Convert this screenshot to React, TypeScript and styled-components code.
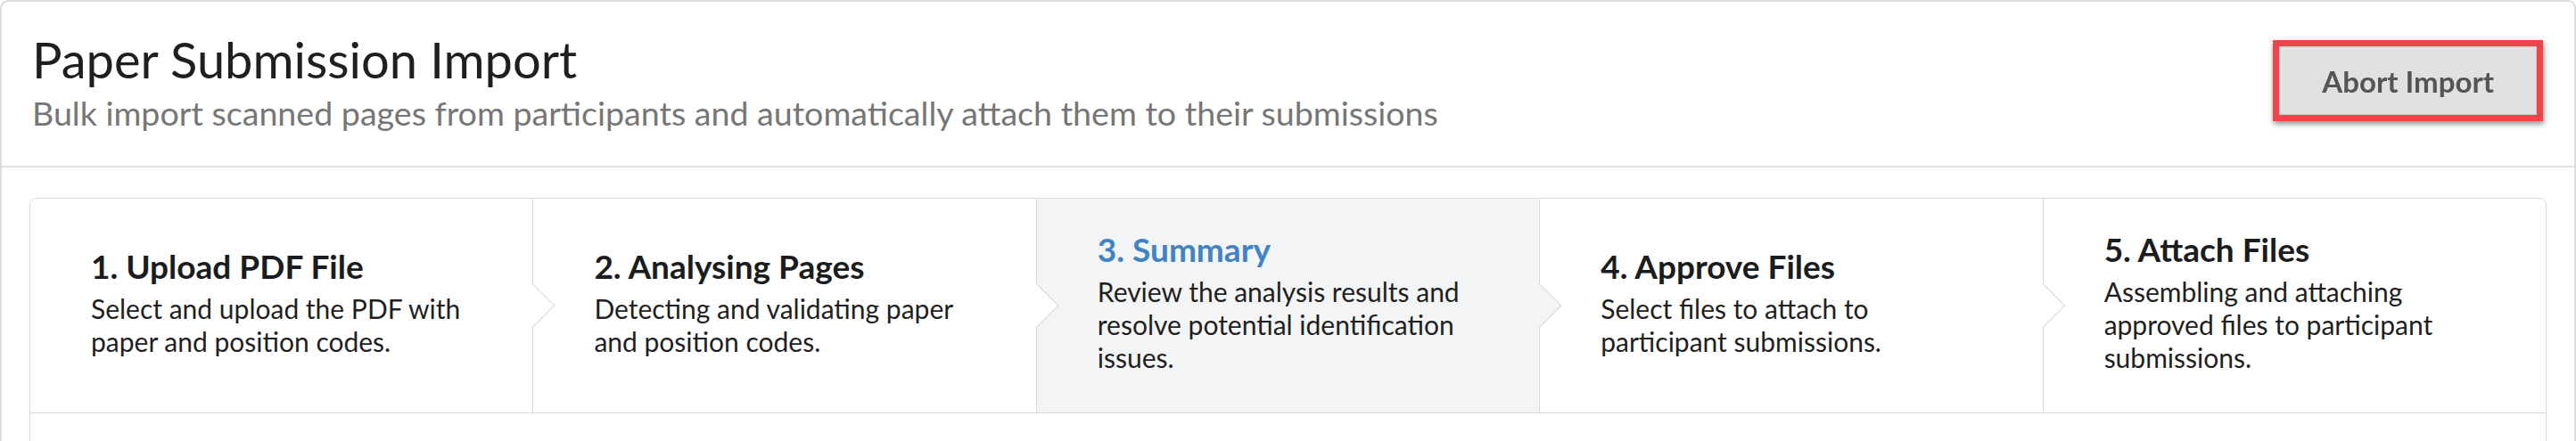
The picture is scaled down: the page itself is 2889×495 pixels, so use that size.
import React from "react";
import styled, { createGlobalStyle } from "styled-components";

const GlobalStyle = createGlobalStyle`
  html, body {
    margin: 0;
    padding: 0;
    background: #ffffff;
    font-family: Lato, "Noto Sans", sans-serif;
    color: #1b1c1d;
  }
  * { box-sizing: border-box; }
`;

const Card = styled.div`
  width: 2889px;
  border: 2px solid #dcdcdc;
  border-bottom: none;
  border-radius: 9px 9px 0 0;
  background: #fff;
`;

const Header = styled.header`
  display: flex;
  justify-content: space-between;
  align-items: flex-start;
  height: 186px;
  padding: 31px 42px 0 34px;
  border-bottom: 2px solid #e0e0e0;
`;

const TitleBlock = styled.div`
  display: flex;
  flex-direction: column;
`;

const Title = styled.h1`
  margin: 0;
  font-size: 56px;
  line-height: 67px;
  font-weight: 400;
  color: #1f1f1f;
`;

const Subtitle = styled.p`
  margin: 4px 0 0;
  font-size: 37.6px;
  line-height: 45px;
  color: #767676;
`;

const AbortButton = styled.button`
  margin-top: 19px;
  height: 77px;
  padding: 0 48px;
  background: #e0e1e2;
  border: none;
  box-shadow: inset 0 0 0 1px #c9cacb;
  outline: 7px solid #f2424a;
  outline-offset: 0;
  filter: drop-shadow(1px 3px 3px rgba(0, 0, 0, 0.45));
  font-family: Lato, "Noto Sans", sans-serif;
  font-weight: 700;
  font-size: 33px;
  color: #555555;
  cursor: pointer;
`;

const Body = styled.div`
  padding: 34px 31px 0;
`;

const Steps = styled.div`
  display: flex;
  border: 1px solid #d9d9da;
  border-radius: 8px 8px 0 0;
  height: 242px;
`;

const Step = styled.div<{ $active?: boolean; $last?: boolean }>`
  position: relative;
  flex: 1 1 0;
  display: flex;
  align-items: center;
  padding: 0 62px 7px 68px;
  background: ${(p) => (p.$active ? "#f3f4f5" : "#ffffff")};
  border-right: ${(p) => (p.$last ? "none" : "1px solid #d9d9da")};
  &:first-child { border-top-left-radius: 8px; }
  &:last-child { border-top-right-radius: 8px; }
`;

const Chevron = styled.span<{ $active?: boolean }>`
  position: absolute;
  top: 50%;
  right: 0;
  width: 36px;
  height: 36px;
  z-index: 2;
  background: ${(p) => (p.$active ? "#f3f4f5" : "#ffffff")};
  border-right: 1px solid #d9d9da;
  border-bottom: 1px solid #d9d9da;
  transform: translate(50%, -50%) rotate(-45deg);
`;

const StepContent = styled.div`
  display: flex;
  flex-direction: column;
`;

const StepTitle = styled.div<{ $active?: boolean }>`
  font-size: 37px;
  line-height: 42px;
  font-weight: 700;
  color: ${(p) => (p.$active ? "#4183c4" : "#1b1c1d")};
`;

const StepDesc = styled.div`
  margin-top: 8px;
  font-size: 30px;
  line-height: 37px;
  color: #1f1f1f;
`;

const Segment = styled.div`
  height: 60px;
  border: 1px solid #d9d9da;
  border-top: none;
`;

const steps = [
  { title: "1. Upload PDF File", desc: "Select and upload the PDF with paper and position codes." },
  { title: "2. Analysing Pages", desc: "Detecting and validating paper and position codes." },
  { title: "3. Summary", desc: "Review the analysis results and resolve potential identification issues.", active: true },
  { title: "4. Approve Files", desc: "Select files to attach to participant submissions." },
  { title: "5. Attach Files", desc: "Assembling and attaching approved files to participant submissions." },
];

export default function App() {
  return (
    <>
      <GlobalStyle />
      <Card>
        <Header>
          <TitleBlock>
            <Title>Paper Submission Import</Title>
            <Subtitle>
              Bulk import scanned pages from participants and automatically attach them to their submissions
            </Subtitle>
          </TitleBlock>
          <AbortButton>Abort Import</AbortButton>
        </Header>
        <Body>
          <Steps>
            {steps.map((s, i) => {
              const last = i === steps.length - 1;
              return (
                <Step key={s.title} $active={s.active} $last={last}>
                  <StepContent>
                    <StepTitle $active={s.active}>{s.title}</StepTitle>
                    <StepDesc>{s.desc}</StepDesc>
                  </StepContent>
                  {!last && <Chevron $active={s.active} />}
                </Step>
              );
            })}
          </Steps>
          <Segment />
        </Body>
      </Card>
    </>
  );
}
